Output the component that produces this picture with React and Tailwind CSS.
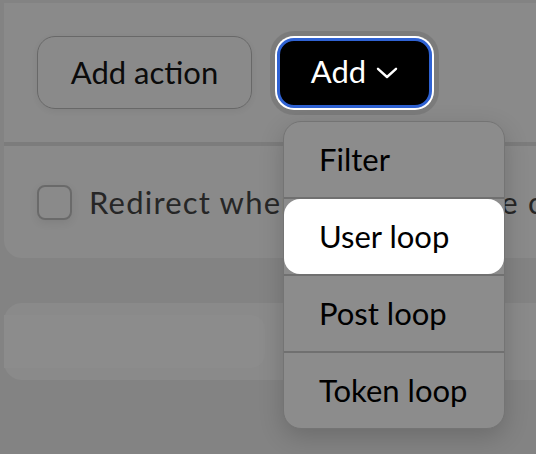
import { useState } from "react";

const items = ["Filter", "User loop", "Post loop", "Token loop"];

const Chevron = () => (
  <svg width="22" height="12" viewBox="0 0 22 12" fill="none" className="shrink-0 mt-[1px]">
    <path d="M2 1.8 L11 10 L20 1.8" stroke="white" strokeWidth="2.4" strokeLinecap="round" strokeLinejoin="round" />
  </svg>
);

export default function App() {
  const [active] = useState("User loop");

  return (
    <div
      className="relative w-[536px] h-[454px] overflow-hidden bg-[#838383] pt-[3px]"
      style={{ fontFamily: "Lato, 'Liberation Sans', sans-serif" }}
    >
      {/* top card */}
      <div className="ml-[4px] -mr-[20px] rounded-bl-[18px] bg-[#8a8a8a]">
        <div className="h-[139px] flex items-center pl-[33px] gap-[25px]">
          <button className="shrink-0 w-[215px] h-[73px] rounded-[18px] border-[1.5px] border-[#686868] text-[31px] text-[#0b0b0b] shadow-[0_2px_6px_rgba(0,0,0,0.06)]">
            Add action
          </button>
          <button className="shrink-0 w-[155px] h-[70px] rounded-[17px] bg-black border-[3px] border-[#2f62d3] text-white text-[31px] flex items-center justify-center gap-[10px] shadow-[0_0_0_2px_#ffffff,0_0_0_7px_rgba(0,0,0,0.1)]">
            <span className="leading-none pb-[2px]">Add</span>
            <Chevron />
          </button>
        </div>
        <div className="h-[4px] bg-[#7c7c7c]" />
        <div className="h-[112px] flex items-center pl-[33px] gap-[17px]">
          <span className="shrink-0 w-[35px] h-[35px] rounded-[8px] border-2 border-[#6a6a6a] shadow-[0_3px_8px_rgba(0,0,0,0.08)]" />
          <span className="text-[31px] tracking-[1.2px] text-[#262626] whitespace-nowrap">
            Redirect when the user is the creator
          </span>
        </div>
      </div>

      {/* second card */}
      <div className="mt-[45px] ml-[4px] -mr-[20px] h-[77px] rounded-l-[18px] bg-[#8a8a8a] flex items-center">
        <div className="w-[261px] h-[53px] rounded-r-[14px] bg-[#8c8c8c]" />
      </div>

      {/* dropdown menu */}
      <div className="absolute left-[283px] top-[121px] w-[222px] rounded-[18px] border border-[#747474] bg-[#8c8c8c] shadow-[0_8px_24px_rgba(0,0,0,0.18)] flex flex-col">
        {items.map((label, i) => (
          <div key={label} className="flex flex-col">
            {i > 0 && <div className="h-[2px] bg-[#707070]" />}
            <div
              className={
                label === active
                  ? "h-[75px] flex items-center pl-[35px] text-[31px] text-black bg-white rounded-[16px]"
                  : "h-[75px] flex items-center pl-[35px] text-[31px] text-black"
              }
            >
              {label}
            </div>
          </div>
        ))}
      </div>
    </div>
  );
}
